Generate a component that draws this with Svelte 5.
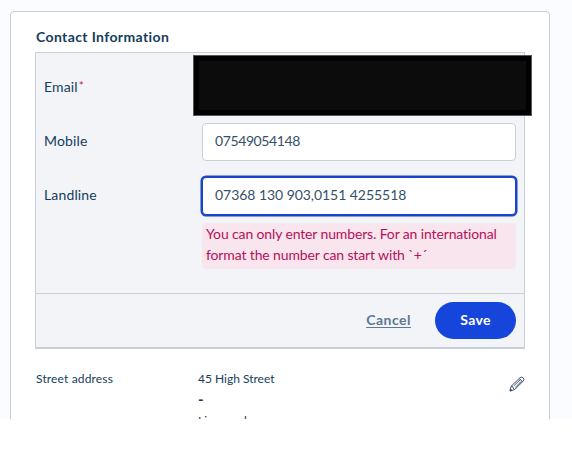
<script>
  let mobile = "07549054148";
  let landline = "07368 130 903,0151 4255518";

  const address = ["45 High Street", "-", "Liverpool"];
</script>

<main class="page">
  <section class="card">
    <h2>Contact Information</h2>

    <form class="form" on:submit|preventDefault>
      <div class="fields">
        <div class="row">
          <label class="email-label" for="email">Email<sup>*</sup></label>
          <div class="control">
            <div id="email" class="input"></div>
            <div class="redacted"></div>
          </div>
        </div>
        <div class="row">
          <label class="mobile-label" for="mobile">Mobile</label>
          <div class="control">
            <input id="mobile" class="input mobile" type="tel" bind:value={mobile} />
          </div>
        </div>
        <div class="row">
          <label class="landline-label" for="landline">Landline</label>
          <div class="control">
            <input id="landline" class="input landline active" type="tel" bind:value={landline} />
          </div>
        </div>
        <p class="error">
          <span class="line-one">You can only enter numbers. For an international</span>
          <span class="line-two">format the number can start with ˋ+ˊ</span>
        </p>
      </div>

      <div class="actions">
        <button type="button" class="cancel">Cancel</button>
        <button type="submit" class="save">Save</button>
      </div>
    </form>

    <div class="summary">
      <span class="term">Street address</span>
      <div class="address">
        {#each address as line}
          <div>{line}</div>
        {/each}
      </div>
      <svg class="edit" viewBox="0 0 16 16" width="16" height="16" aria-hidden="true">
        <path d="M1 15 L2.1 10.3 L10.8 1.9 Q12.5 0.4 14.2 1.8 Q15.8 3.4 14.2 5.1 L5.6 13.7 Z" />
        <path d="M2.1 10.3 L3.8 10.5 L4.1 12.1 L5.6 13.7 M4.9 9.7 L11.2 3.6 M6.4 11.2 L12.6 5.1 M10.2 2.5 L13.6 5.7" />
        <path class="tip" d="M1 15 L1.5 13 L3 14.4 Z" />
      </svg>
    </div>
  </section>
</main>

<style>
  :global(body) {
    background: #fff;
  }

  .page {
    box-sizing: border-box;
    height: 419px;
    padding: 11px 22px 0 10px;
    overflow: hidden;
    background: #fbfcff;
    color: #153d5c;
    font-family: Lato, "Open Sans", sans-serif;
  }

  .card {
    box-sizing: border-box;
    height: 440px;
    padding: 15px 24px 0;
    border: 1px solid #c9ced5;
    border-radius: 4px;
    background: #fff;
  }

  h2 {
    margin: 0 0 5px;
    padding-left: 1px;
    font-size: 14px;
    font-weight: 700;
    line-height: 20px;
    letter-spacing: 0.38px;
  }

  .form {
    box-sizing: border-box;
    height: 297px;
    border: 1px solid #c9ced9;
    border-bottom-width: 2px;
    background: #f2f4f8;
  }

  .fields {
    box-sizing: border-box;
    height: 241px;
    padding: 7px 8px 0;
    border-bottom: 1px solid #c9ced9;
  }

  .row {
    display: grid;
    grid-template-columns: 158px 314px;
    align-items: center;
    height: 54px;
  }

  label {
    font-size: 14px;
    line-height: 20px;
    letter-spacing: 0.15px;
  }

  sup {
    margin-left: 1px;
    color: #d3145a;
    font-size: 12px;
    line-height: 0;
    vertical-align: 2px;
  }

  .control {
    padding-top: 1px;
    position: relative;
  }

  .input {
    display: block;
    box-sizing: border-box;
    width: 314px;
    height: 38px;
    padding: 0 12px 3px;
    border: 1px solid #cbd0dc;
    border-radius: 4px;
    outline: none;
    background: #fff;
    color: #365069;
    font-family: inherit;
    font-size: 14px;
  }

  .mobile {
    letter-spacing: -0.4px;
  }

  .landline {
    letter-spacing: -0.05px;
  }

  .active {
    border-color: #1b43c5;
    box-shadow: 0 0 0 1.5px #1b43c5;
  }

  .redacted {
    position: absolute;
    top: -12px;
    left: -8px;
    box-sizing: border-box;
    width: 337px;
    height: 59px;
    border: 5px solid #000;
    box-shadow: 0 0 0 1px #55565a;
    background: #0c0c0c;
  }

  .error {
    display: flex;
    flex-direction: column;
    box-sizing: border-box;
    width: 314px;
    height: 46px;
    margin: 1px 0 0 158px;
    padding: 0 4px;
    border-radius: 4px;
    background: #f9e5ee;
    color: #b6105a;
    font-size: 14px;
    line-height: 21px;
    letter-spacing: -0.13px;
    white-space: nowrap;
  }

  .actions {
    display: flex;
    align-items: center;
    justify-content: flex-end;
    gap: 24px;
    height: 53px;
    padding-right: 8px;
  }

  button {
    padding: 0;
    border: 0;
    font-family: inherit;
    font-size: 14px;
    font-weight: 700;
  }

  .cancel {
    padding-bottom: 3px;
    background: none;
    color: #5d7892;
    letter-spacing: 0.5px;
    text-decoration: underline;
    text-underline-offset: 2px;
  }

  .save {
    padding-bottom: 2px;
    width: 81px;
    height: 37px;
    border-radius: 19px;
    background: #1645dc;
    color: #fff;
    letter-spacing: 0.3px;
  }

  .summary {
    display: grid;
    grid-template-columns: 163px 1fr 16px;
    padding-top: 20px;
    font-size: 12px;
    line-height: 20px;
  }

  .term {
    padding-left: 1px;
    letter-spacing: 0.15px;
  }

  .address div:nth-child(2) {
    font-size: 15px;
    font-weight: 700;
  }

  .address div:last-child {
    padding-top: 2px;
  }

  .edit {
    margin-top: 7px;
    fill: none;
    stroke: #405873;
    stroke-width: 1;
    stroke-linejoin: round;
  }

  .tip {
    fill: #405873;
  }
</style>
